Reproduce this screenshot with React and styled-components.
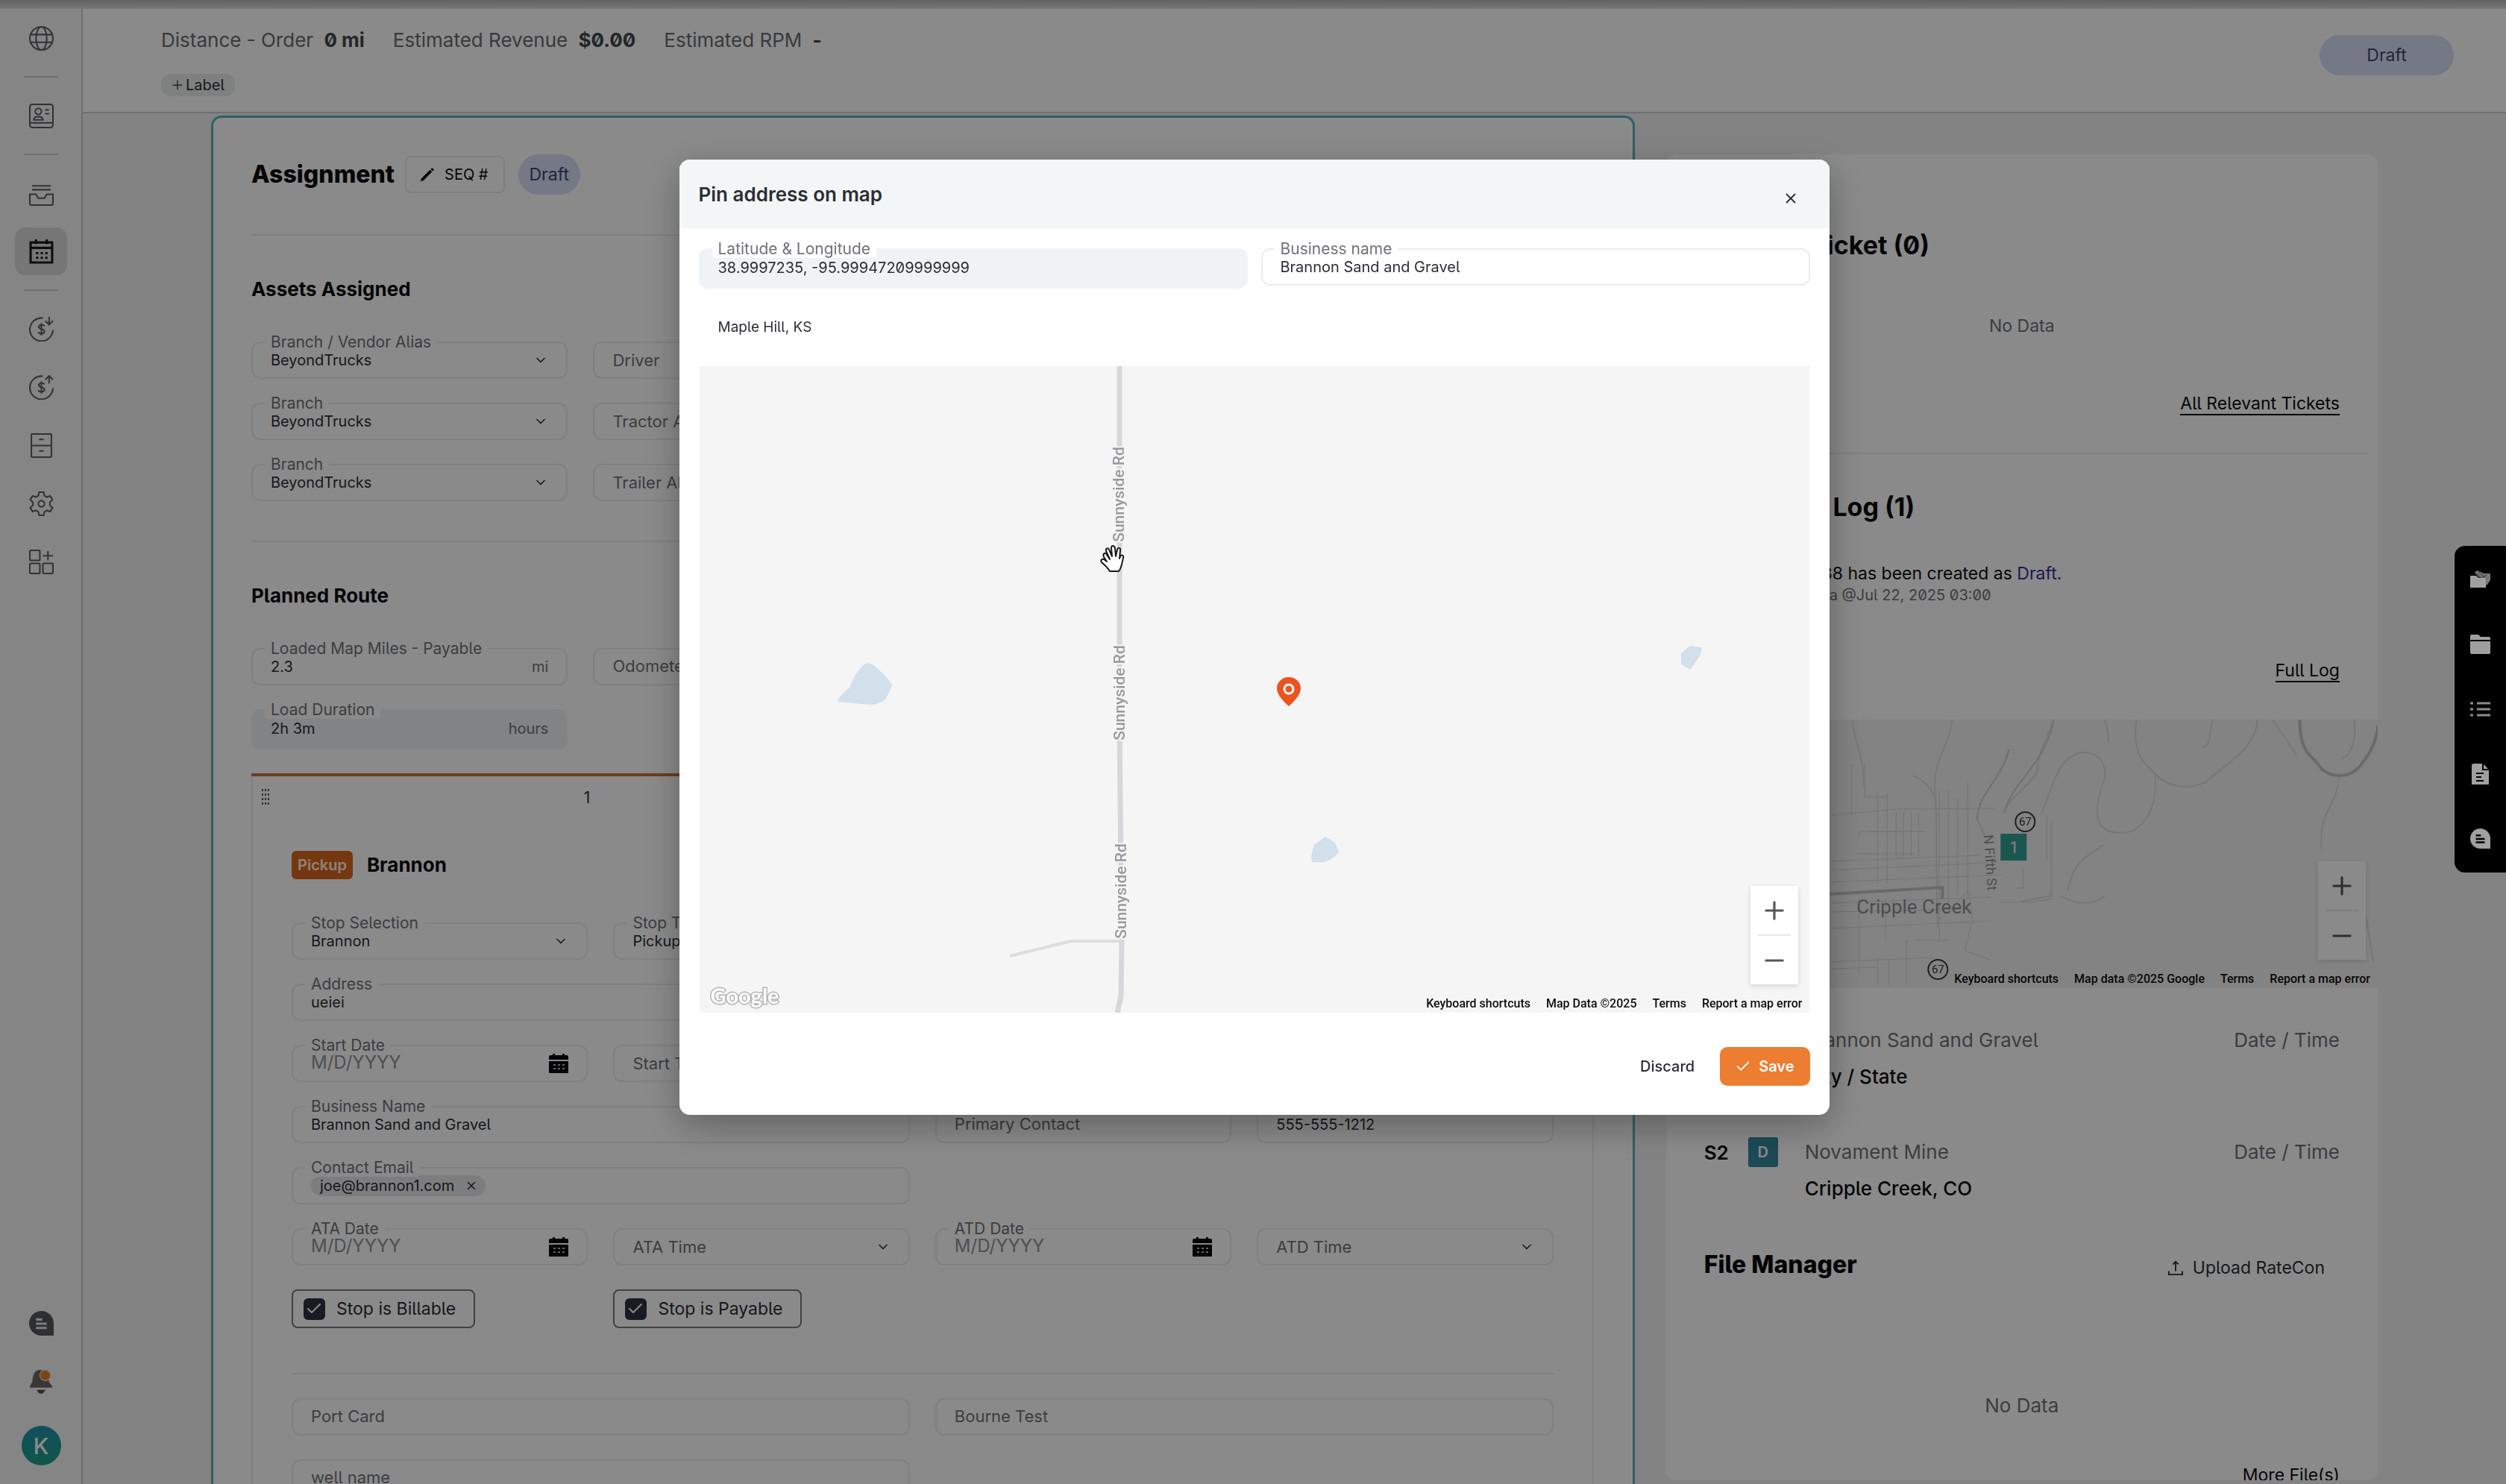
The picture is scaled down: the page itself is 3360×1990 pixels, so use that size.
import React from 'react'
import styled, { createGlobalStyle } from 'styled-components'
import { Check, ChevronDown, Hand, Plus, Minus, X } from 'lucide-react'

const fontSans = "Inter, 'Liberation Sans', sans-serif"
const fontMap = "Roboto, 'Liberation Sans', sans-serif"
const colorInk = '#0b0b0d'
const colorText = '#2b2e34'
const colorMuted = '#707278'
const colorLine = '#ededee'
const colorOrange = '#ed7d31'
const colorTeal = '#55b0bf'

const assetRows = [
	{ label: 'Branch / Vendor Alias', next: 'Driver' },
	{ label: 'Branch', next: 'Tractor Alias' },
	{ label: 'Branch', next: 'Trailer Alias' },
]

const App = () => (
	<>
		<GlobalStyle />
		<Page>
			<Strip />
			<Shell>
				<SideBar />
				<Main>
					<Header />
					<Columns>
						<Assignment />
						<Aside />
					</Columns>
				</Main>
			</Shell>
		</Page>
		<Backdrop>
			<PinModal />
		</Backdrop>
		<Rail />
	</>
)

/* Side bar */

const SideBar = () => (
	<Side>
		<SideGroup>
			<SideButton aria-label="Website"><GlobeIcon /></SideButton>
			<SideLine />
			<SideButton aria-label="Contacts"><CardIcon /></SideButton>
			<SideLine />
			<SideButton aria-label="Orders"><TrayIcon /></SideButton>
			<SideGap />
			<SideButton aria-label="Planner" $active><PlannerIcon /></SideButton>
			<SideLine />
			<SideButton aria-label="Receivables"><MoneyIcon down /></SideButton>
			<SideGap />
			<SideButton aria-label="Payables"><MoneyIcon /></SideButton>
			<SideGap />
			<SideButton aria-label="Records"><CabinetIcon /></SideButton>
			<SideGap />
			<SideButton aria-label="Settings"><GearIcon /></SideButton>
			<SideGap />
			<SideButton aria-label="Apps"><AppsIcon /></SideButton>
		</SideGroup>
		<SideGroup>
			<SideButton aria-label="Chat"><ChatIcon size={33} fill="#55585f" lines="#e8e8ea" /></SideButton>
			<SideGap />
			<SideButton aria-label="Notifications"><BellIcon /></SideButton>
			<SideGap />
			<Avatar aria-label="Account">K</Avatar>
		</SideGroup>
	</Side>
)

const Stroke = ({ size = 33, children, width = 2 }) => (
	<svg width={size} height={size} viewBox="0 0 32 32" fill="none" stroke="currentColor" strokeWidth={width}>
		{children}
	</svg>
)

const GlobeIcon = () => (
	<Stroke>
		<circle cx="16" cy="16" r="15" />
		<ellipse cx="16" cy="16" rx="7" ry="15" />
		<path d="M2 11h28M2 21h28" />
	</Stroke>
)

const CardIcon = () => (
	<Stroke>
		<rect x="1" y="1" width="30" height="30" rx="3" />
		<path d="M1 25h30" />
		<circle cx="12" cy="10" r="4" />
		<path d="M6 21c0-3 2-4 6-4s6 1 6 4zM21 8h5M21 13h5" />
	</Stroke>
)

const TrayIcon = () => (
	<Stroke>
		<path d="M4 6h24M4 11h24M1 17h8l3 5h8l3-5h8v12a2 2 0 0 1-2 2H3a2 2 0 0 1-2-2z" />
	</Stroke>
)

const PlannerIcon = () => (
	<Stroke width={3}>
		<path d="M2 4h28v26H2zM2 11h28M9 0v6M23 0v6" />
		<path d="M9 18h3M15 18h3M21 18h3M9 24h3M15 24h3M21 24h3" strokeWidth="3" />
	</Stroke>
)

const MoneyIcon = ({ down }) => (
	<Stroke>
		<path d="M18 1.500A15 15 0 1 0 31 17" />
		<path d={down ? 'M26 0v9M21 5l5 5 5-5' : 'M26 11V2M21 6l5-5 5 5'} />
		<path d="M20 12c-1-2-7-2.500-7.500.8C12 16.500 20 15 20 19c0 3.500-7 3.500-8 .5M16 8v16" />
	</Stroke>
)

const CabinetIcon = () => (
	<Stroke>
		<rect x="3" y="1" width="26" height="30" rx="1" />
		<path d="M3 16h26M13 8h6M13 23h6" />
	</Stroke>
)

const GearIcon = () => (
	<Stroke>
		<circle cx="16" cy="16" r="4" />
		<path d="M13 1h6l1 4.500 3 1.800 4.500-1.500 3 5-3.500 3.200v4l3.500 3.200-3 5-4.500-1.500-3 1.800-1 4.500h-6l-1-4.500-3-1.800-4.500 1.500-3-5L5 18v-4l-3.500-3.200 3-5L9 7.300l3-1.800z" />
	</Stroke>
)

const AppsIcon = () => (
	<Stroke>
		<rect x="1" y="1" width="13" height="13" rx="1" />
		<rect x="1" y="18" width="13" height="13" rx="1" />
		<rect x="18" y="18" width="13" height="13" rx="1" />
		<path d="M24.500 2v12M18 8h13" />
	</Stroke>
)

const ChatIcon = ({ size, fill, lines }) => (
	<svg width={size} height={size} viewBox="0 0 32 32" fill="none">
		<path d="M16 0a16 16 0 0 1 16 16v16H16a16 16 0 0 1 0-32z" fill={fill} />
		<path d="M9 11h8M9 16.500h14M9 22h14" stroke={lines} strokeWidth="3" />
	</svg>
)

const BellIcon = () => (
	<svg width="33" height="33" viewBox="0 0 32 32">
		<path d="M14 1c6 0 10 4 11 10l1 6 4 5v2H1v-2l3-5 1-7C6 5 9 1 14 1z" fill="#6b6763" />
		<path d="M10 27h11c-1 3-3 5-5.500 5S11 30 10 27z" fill="#4a4a4c" />
		<circle cx="21" cy="8" r="7" fill="#e8802a" stroke="#f6f6f6" />
	</svg>
)

/* Header */

const Header = () => (
	<Top>
		<div>
			<Stats>
				<span>Distance - Order <b>0 mi</b></span>
				<span>Estimated Revenue <b>$0.00</b></span>
				<span>Estimated RPM <b>-</b></span>
			</Stats>
			<LabelButton><Plus size={20} strokeWidth={1.500} />Label</LabelButton>
		</div>
		<StatusPill $wide>Draft</StatusPill>
	</Top>
)

/* Form parts */

const Field = ({ label, value, unit, select, date, span, disabled, children }) => (
	<Box $span={span} $disabled={disabled}>
		<Caption>{label}</Caption>
		{children}
		{!children && select && (
			<Select defaultValue={value}>
				<option>{value}</option>
			</Select>
		)}
		{!children && !select && (
			<Input
				defaultValue={value}
				placeholder={date ? 'M/D/YYYY' : ''}
				disabled={disabled}
				$date={date}
			/>
		)}
		{unit && <Unit>{unit}</Unit>}
		{select && <ChevronDown size={20} color={colorText} />}
		{date && <DateIcon />}
	</Box>
)

const EmptyField = ({ label, select, span }) => (
	<Box $span={span}>
		{select ? (
			<Select aria-label={label} $empty>
				<option>{label}</option>
			</Select>
		) : (
			<Input aria-label={label} placeholder={label} />
		)}
		{select && <ChevronDown size={20} color={colorText} />}
	</Box>
)

const DateIcon = () => (
	<svg width="26" height="28" viewBox="0 0 26 28" fill={colorInk}>
		<path d="M5 1h3v2h10V1h3v2h3a2 2 0 0 1 2 2v4H0V5a2 2 0 0 1 2-2h3z" />
		<path d="M0 11h26v15a1 1 0 0 1-1 1H1a1 1 0 0 1-1-1z" />
		<path d="M6 16h3M12 16h3M18 16h3M6 21h3M12 21h3M18 21h3" stroke="#b5b5b5" strokeWidth="2" />
	</svg>
)

const Tick = ({ label }) => (
	<TickBox>
		<input type="checkbox" defaultChecked />
		<Check size={24} color="#ffffff" strokeWidth={2} />
		{label}
	</TickBox>
)

/* Assignment card */

const Assignment = () => (
	<Card>
		<CardHead>
			<Heading>Assignment</Heading>
			<SeqButton>
				<svg width="20" height="20" viewBox="0 0 22 22" fill={colorInk}>
					<path d="M1 21l1-4L15 4l3 3L5 20zM16 3l2-2 3 3-2 2z" />
				</svg>
				SEQ #
			</SeqButton>
			<StatusPill>Draft</StatusPill>
		</CardHead>
		<Section>
			<SubHeading>Assets Assigned</SubHeading>
			<Grid>
				{assetRows.map(row => (
					<React.Fragment key={row.next}>
						<Field label={row.label} value="BeyondTrucks" select />
						<EmptyField label={row.next} select />
						<Blank $span={2} />
					</React.Fragment>
				))}
			</Grid>
		</Section>
		<Section>
			<SubHeading>Planned Route</SubHeading>
			<Grid>
				<Field label="Loaded Map Miles - Payable" value="2.3" unit="mi" />
				<EmptyField label="Odometer" />
				<Blank $span={2} />
				<Field label="Load Duration" value="2h 3m" unit="hours" disabled />
			</Grid>
		</Section>
		<Stop>
			<Tabs>
				<Tab $active>
					<DragDots />
					1
				</Tab>
				<Tab>2</Tab>
			</Tabs>
			<StopBody>
				<StopHead>
					<PickupBadge>Pickup</PickupBadge>
					<SubHeading>Brannon</SubHeading>
				</StopHead>
				<Grid>
					<Field label="Stop Selection" value="Brannon" select />
					<Field label="Stop Type" value="Pickup" select />
					<Blank $span={2} />
					<Field label="Address" value="ueiei" span={4} />
					<Field label="Start Date" date />
					<EmptyField label="Start Time" select />
					<Blank $span={2} />
					<Field label="Business Name" value="Brannon Sand and Gravel" span={2} />
					<EmptyField label="Primary Contact" />
					<Field label="Phone" value="555-555-1212" />
					<Field label="Contact Email" span={2}>
						<Chip>
							joe@brannon1.com
							<X size={18} />
						</Chip>
					</Field>
					<Blank $span={2} />
					<Field label="ATA Date" date />
					<EmptyField label="ATA Time" select />
					<Field label="ATD Date" date />
					<EmptyField label="ATD Time" select />
					<Tick label="Stop is Billable" />
					<Tick label="Stop is Payable" />
				</Grid>
				<Extra>
					<EmptyField label="Port Card" span={2} />
					<EmptyField label="Bourne Test" span={2} />
					<EmptyField label="well name" span={2} />
				</Extra>
			</StopBody>
		</Stop>
	</Card>
)

const DragDots = () => (
	<svg width="10" height="22" viewBox="0 0 10 22" fill="#5a5a5c">
		{[0, 1, 2, 3].map(y =>
			[0, 1, 2].map(x => <rect key={`${x}-${y}`} x={x * 4} y={y * 6} width="2" height="3" />)
		)}
	</svg>
)

/* Right column */

const Aside = () => (
	<Panel>
		<PanelBlock>
			<PanelHeading>Support Ticket (0)</PanelHeading>
			<TicketEmpty>No Data</TicketEmpty>
			<MoreLink href="#tickets">All Relevant Tickets</MoreLink>
		</PanelBlock>
		<PanelLine />
		<PanelBlock $log>
			<PanelHeading>Operation Log (1)</PanelHeading>
			<LogText>
				Assignment 1238 has been created as <em>Draft.</em>
			</LogText>
			<LogMeta>By Kristina Moreira @Jul 22, 2025 03:00</LogMeta>
			<MoreLink href="#log">Full Log</MoreLink>
		</PanelBlock>
		<TownMap />
		<Route>
			<RouteStop>
				<RouteCode>S1<TypeBadge $pickup>P</TypeBadge></RouteCode>
				<RouteName>Brannon Sand and Gravel</RouteName>
				<RouteName>Date / Time</RouteName>
				<RoutePlace>City / State</RoutePlace>
			</RouteStop>
			<RouteStop>
				<RouteCode>S2<TypeBadge>D</TypeBadge></RouteCode>
				<RouteName>Novament Mine</RouteName>
				<RouteName>Date / Time</RouteName>
				<RoutePlace>Cripple Creek, CO</RoutePlace>
			</RouteStop>
		</Route>
		<Files>
			<FilesHead>
				<Heading as="h2">File Manager</Heading>
				<UploadButton>
					<svg width="20" height="20" viewBox="0 0 22 22" fill="none" stroke={colorText} strokeWidth="2">
						<path d="M11 16V2M7 6l4-4 4 4M1 16v5h20v-5" />
					</svg>
					Upload RateCon
				</UploadButton>
			</FilesHead>
			<FilesEmpty>No Data</FilesEmpty>
			<FilesMore href="#files">More File(s)</FilesMore>
		</Files>
	</Panel>
)

const TownMap = () => (
	<MapFrame $town>
		<svg width="100%" height="360" viewBox="0 0 956 360" preserveAspectRatio="xMaxYMid slice" fill="none">
			<rect width="956" height="360" fill="#f2f2f3" />
			<g stroke="#dcdcde" strokeWidth="2">
				<path d="M252 0c0 30 14 40 15 90M385 0c-4 40-26 50-23 100 4 30 0 60 4 180M461 40c-8 40-44 60-42 95l10 20" />
				<path d="M521 0c-10 30-20 40-22 70-10 20-40 35-44 55M590 0c4 20 6 25 4 30M734 0c-3 20-4 40-14 36" />
				<path d="M505 125c12-20 18-78 56-81 30 0 34 30 24 48-12 40-6 60 28 60 30-2 48-35 44-76" />
				<path d="M632 0c-6 50 12 58 24 72 20 22 60 24 78 4 30-24 60-44 60-76" />
				<path d="M815 0l32 48M924 0c4 40-10 50-16 52M904 74c-4 50-26 40-24 100M940 265l10 60" />
				<path d="M518 138v98l-40 8M530 236c20 12 44 14 60 0M540 230c6-40 30-50 48-62M332 75c20 8 26 20 30 30" />
			</g>
			<g stroke="#d6d6d8" strokeWidth="1">
				<path d="M222 128l90-8 130-1M222 190l200-8M222 202l210-10M222 218l230-10M222 246l215-8M222 258l190-4M222 280l215-10M222 325l140-6M222 334l60-2" />
				<path d="M250 60v70M268 60v44h30v-5M298 100v120M285 100v120M310 124v60M320 124v60M330 124v60M340 124v60M368 95v200M380 95v150M392 105v130M406 84v156" />
				<path d="M260 160v-10h60M255 180h80M272 150h76M260 240v100M296 240v54M324 295v60M285 320v36M300 320v36M338 296h40M366 270l40-40M408 230l4 40-10 40 34 12" />
				<path d="M480 200v26h-10M448 245h44l28-5M512 130v60" />
			</g>
			<path d="M222 234l150-9v16" stroke="#c4c4c7" strokeWidth="4" />
			<path d="M851 0c0 48 20 50 26 62 14 18 44 18 58-4 12-14 20-34 21-50" stroke="#c4c4c6" strokeWidth="4" />
			<path d="M461 40c-8 40-44 60-42 95M521 0c-10 60-54 80-66 125" stroke="#d0d0d2" strokeWidth="2" />
			<g fontFamily={fontMap} textAnchor="middle">
				<text x="334" y="260" fontSize="26" fill="#8d8f92">Cripple Creek</text>
				<text transform="translate(430 192) rotate(86)" fontSize="18" fill="#8d8f92">N Fifth St</text>
				<g fill="#f2f2f3" stroke="#3a3a3c" strokeWidth="2">
					<circle cx="483" cy="137" r="13" />
					<circle cx="366" cy="335" r="13" />
				</g>
				<rect x="450" y="153" width="35" height="36" fill="#359f97" />
				<text x="468" y="179" fontSize="22" fill="#f2f2f3">1</text>
				<g fontSize="15" fill="#3a3a3c">
					<text x="483" y="142">67</text>
					<text x="366" y="340">67</text>
				</g>
			</g>
		</svg>
		<ZoomControl />
		<Credits data="Map data ©2025 Google" />
	</MapFrame>
)

const ZoomControl = () => (
	<ZoomBox>
		<button aria-label="Zoom in"><Plus size={38} color="#55565a" strokeWidth={2} /></button>
		<hr />
		<button aria-label="Zoom out"><Minus size={38} color="#55565a" strokeWidth={2} /></button>
	</ZoomBox>
)

const Credits = ({ data }) => (
	<CreditRow>
		<a href="#keys">Keyboard shortcuts</a>
		<span>{data}</span>
		<a href="#terms">Terms</a>
		<a href="#report">Report a map error</a>
	</CreditRow>
)

/* Modal */

const PinModal = () => (
	<Modal role="dialog" aria-label="Pin address on map">
		<ModalHead>
			<ModalTitle>Pin address on map</ModalTitle>
			<CloseButton aria-label="Close"><X size={22} strokeWidth={2} /></CloseButton>
		</ModalHead>
		<ModalBody>
			<ModalFields>
				<Field label="Latitude & Longitude" value="38.9997235, -95.99947209999999" disabled />
				<Field label="Business name" value="Brannon Sand and Gravel" />
			</ModalFields>
			<Place>Maple Hill, KS</Place>
			<MapFrame>
				<svg width="100%" height="867" viewBox="0 0 1488 867" fill="none">
					<rect width="1488" height="867" fill="#f5f5f5" />
					<path d="M563 0v480l3 292-1 73-5 22" stroke="#d5d7db" strokeWidth="7" />
					<path d="M416 791l82-20h68" stroke="#dcdde0" strokeWidth="4" />
					<g fill="#d1e0eb">
						<path d="M227 398q6 2 12 8 16 14 19 22l-8 18q-10 8-21 8l-44-4q0-6 17-20 4-14 12-23 7-9 13-9z" />
						<path d="M839 631l13 8 5 13q-8 10-20 13h-16l-1-8 4-15z" />
						<path d="M1328 375l16 2-2 10-14 20-12-7v-15z" />
					</g>
					<g
						fontFamily={fontMap}
						fontSize="21"
						fontWeight="500"
						fill="#98999e"
						stroke="#f5f5f5"
						strokeWidth="4"
						paintOrder="stroke"
						textAnchor="middle"
					>
						<text transform="translate(569 172) rotate(-90)">Sunnyside Rd</text>
						<text transform="translate(570 438) rotate(-90)">Sunnyside Rd</text>
						<text transform="translate(572 704) rotate(-90)">Sunnyside Rd</text>
					</g>
					<path d="M790 456q-16-14-16-24a16 15 0 0 1 32 0q0 10-16 24z" fill="#e9541f" />
					<circle cx="790" cy="433" r="6" stroke="#ffffff" strokeWidth="3" />
					{/* grab cursor */}
					<path
						d="M542 256c-2-5 2-7 4-3l4 6-5-11c-1-4 3-5 4-2l4 9-1-11c0-4 4-4 5 0l1 11 2-9c1-3 5-3 4 1l-1 11 1-3c2-3 5-1 4 2-2 8-2 13-6 18h-12c-3-5-6-8-11-12-2-3 1-5 3-4l4 3z"
						fill="#ffffff"
						stroke="#1a1a1a"
						strokeWidth="2"
						strokeLinejoin="round"
					/>
				</svg>
				<Google>Google</Google>
				<ZoomControl />
				<Credits data="Map Data ©2025" />
			</MapFrame>
		</ModalBody>
		<ModalFoot>
			<DiscardButton>Discard</DiscardButton>
			<SaveButton><Check size={22} strokeWidth={2} />Save</SaveButton>
		</ModalFoot>
	</Modal>
)

/* Floating tool rail */

const Rail = () => (
	<RailBox>
		<button aria-label="Shared folders">
			<svg width="27" height="24" viewBox="0 0 27 24">
				<path d="M6 3l3-3 5 2 4 2h9v9l-5 7z" fill="#777" />
				<path d="M9 4l5 6 8-4M11 2l10 8" stroke="#333" fill="none" />
				<path d="M0 7h8l3 3h10v13H0z" fill="#a0a0a0" />
			</svg>
		</button>
		<button aria-label="Folder">
			<svg width="27" height="26" viewBox="0 0 27 26" fill="#a0a0a0">
				<path d="M0 7V2a2 2 0 0 1 2-2h9l3 3h11a2 2 0 0 1 2 2v2zM0 9h27v15a2 2 0 0 1-2 2H2a2 2 0 0 1-2-2z" />
			</svg>
		</button>
		<button aria-label="List">
			<svg width="27" height="20" viewBox="0 0 27 20" stroke="#8c8c8c" strokeWidth="3">
				<path d="M0 2h4M0 10h4M0 18h4M9 2h18M9 10h18M9 18h18" />
			</svg>
		</button>
		<button aria-label="Document">
			<svg width="23" height="28" viewBox="0 0 23 28" fill="none">
				<path d="M3 0h12l8 8v20H0V3a3 3 0 0 1 3-3z" fill="#a0a0a0" />
				<path d="M15 0v8h8M6 13h10M6 18h7M6 23h10" stroke="#000" strokeWidth="2" />
			</svg>
		</button>
		<button aria-label="Messages"><ChatIcon size={27} fill="#a0a0a0" lines="#000" /></button>
	</RailBox>
)

const GlobalStyle = createGlobalStyle`
	* {
		box-sizing: border-box;
	}

	body {
		background: #f3f3f3;
		color: ${colorText};
		font-family: ${fontSans};
		font-feature-settings: 'cv05', 'zero';
		margin: 0;
		overflow: hidden;
	}

	button,
	input,
	select {
		color: inherit;
		font-family: inherit;
		font-feature-settings: inherit;
		margin: 0;
	}

	button {
		align-items: center;
		background: none;
		border: none;
		display: flex;
		padding: 0;
	}

	svg {
		display: block;
		flex: none;
	}

	h1,
	h2,
	p {
		margin: 0;
	}
`

const Page = styled.div`
	display: flex;
	flex-direction: column;
	height: 100vh;
	overflow: hidden;
`

const Strip = styled.div`
	background: linear-gradient(#b4b4b4, #dedede);
	flex: none;
	height: 12px;
`

const Shell = styled.div`
	display: flex;
	flex: 1;
	min-height: 0;
`

const Side = styled.nav`
	background: #f6f6f6;
	border-right: 2px solid #cccccc;
	color: #5c5e64;
	display: flex;
	flex: none;
	flex-direction: column;
	justify-content: space-between;
	padding: 7px 19px 25px 20px;
	width: 111px;
`

const SideGroup = styled.div`
	align-items: center;
	display: flex;
	flex-direction: column;
`

const SideButton = styled.button`
	background: ${props => (props.$active ? '#dadada' : 'none')};
	border-radius: 14px;
	color: ${props => (props.$active ? '#1a1a1c' : 'inherit')};
	height: 64px;
	justify-content: center;
	width: 70px;
`

const SideGap = styled.i`
	height: 14px;
`

const SideLine = styled.i`
	background: #cfcfcf;
	height: 2px;
	margin: 19px 0;
	width: 46px;
`

const Avatar = styled.button`
	background: linear-gradient(#2193ad, #1f9f85);
	border-radius: 50%;
	color: #ffffff;
	font-size: 30px;
	font-weight: 500;
	height: 53px;
	justify-content: center;
	margin-top: 14px;
	width: 53px;
`

const Main = styled.main`
	display: flex;
	flex: 1;
	flex-direction: column;
	min-width: 0;
`

const Top = styled.header`
	align-items: flex-start;
	background: #ffffff;
	border-bottom: 2px solid #d0d0d4;
	display: flex;
	flex: none;
	height: 140px;
	justify-content: space-between;
	padding: 24px 70px 0 105px;

	> span {
		margin-top: 11px;
	}
`

const Stats = styled.div`
	color: #6a6c71;
	display: flex;
	font-size: 26px;
	gap: 38px;
	line-height: 36px;

	b {
		color: #44464a;
		font-weight: 700;
		margin-left: 7px;
	}
`

const LabelButton = styled.button`
	background: #eaefed;
	border-radius: 12px;
	font-size: 20px;
	gap: 1px;
	height: 30px;
	margin-top: 27px;
	padding: 0 14px 0 12px;
`

const StatusPill = styled.span`
	background: #d8def6;
	border-radius: 28px;
	color: #3f4673;
	font-size: 23px;
	line-height: 54px;
	padding: 0 15px;
	text-align: center;
	width: ${props => (props.$wide ? '180px' : 'auto')};
`

const Columns = styled.div`
	display: grid;
	flex: 1;
	gap: 42px;
	grid-template-columns: minmax(0, 2fr) minmax(0, 1fr);
	min-height: 0;
	padding: 3px 172px 0;
`

const Card = styled.section`
	background: #ffffff;
	border: 3px solid ${colorTeal};
	border-bottom: none;
	border-radius: 14px 14px 0 0;
	min-height: 0;
	overflow: hidden;
	padding: 49px 52px 0 51px;
`

const CardHead = styled.div`
	align-items: center;
	display: flex;
	gap: 14px;
	height: 54px;
	margin-bottom: 53px;

	> span {
		margin-left: 4px;
	}
`

const Heading = styled.h1`
	color: ${colorInk};
	font-size: 32px;
	font-weight: 800;
	line-height: 40px;
`

const SeqButton = styled.button`
	border: 2px solid ${colorLine};
	border-radius: 8px;
	color: ${colorInk};
	font-size: 20px;
	gap: 13px;
	height: 50px;
	padding: 0 20px 0 18px;
`

const Section = styled.div`
	border-top: 2px solid ${colorLine};
	padding: 56px 0 53px;

	& + & {
		padding-bottom: 32px;
	}
`

const SubHeading = styled.h2`
	color: ${colorInk};
	font-size: 26px;
	font-weight: 700;
	line-height: 32px;
`

const Grid = styled.div`
	align-items: start;
	display: grid;
	gap: 32px 34px;
	grid-template-columns: repeat(4, minmax(0, 1fr));
	padding-top: 54px;
`

const Blank = styled.span`
	grid-column: span ${props => props.$span};
`

const Box = styled.label`
	align-items: center;
	background: ${props => (props.$disabled ? '#eff3f6' : 'transparent')};
	border: 2px solid ${props => (props.$disabled ? '#eff3f6' : colorLine)};
	border-radius: 12px;
	display: flex;
	grid-column: span ${props => props.$span || 1};
	height: ${props => (props.$disabled ? '54px' : '50px')};
	padding: ${props => (props.$disabled ? '0 24px 3px' : '0 24px')};
	position: relative;
`

/* sits on the top border of its box */
const Caption = styled.span`
	background: #ffffff;
	border-radius: 4px;
	color: ${colorMuted};
	font-size: 21px;
	left: 16px;
	line-height: 24px;
	padding: 0 8px;
	position: absolute;
	top: -13px;
`

const Input = styled.input`
	background: none;
	border: none;
	flex: 1;
	font-size: 20px;
	height: 30px;
	min-width: 0;
	outline: none;
	padding: 0;

	&::placeholder {
		color: ${props => (props.$date ? '#909298' : colorMuted)};
		font-size: ${props => (props.$date ? '24px' : '22px')};
		opacity: 1;
	}

	&:disabled {
		color: ${colorText};
	}
`

const Select = styled.select`
	appearance: none;
	background: none;
	border: none;
	color: ${props => (props.$empty ? colorMuted : colorText)};
	flex: 1;
	font-size: ${props => (props.$empty ? '22px' : '20px')};
	height: 30px;
	min-width: 0;
	outline: none;
	padding: 0;
`

const Unit = styled.span`
	color: ${colorMuted};
	font-size: 20px;
`

const Chip = styled.span`
	align-items: center;
	background: #e8e8ec;
	border-radius: 14px;
	display: flex;
	font-size: 20px;
	gap: 14px;
	line-height: 28px;
	padding: 0 10px 0 12px;
`

const TickBox = styled.label`
	align-items: center;
	border: 2px solid #77797e;
	border-radius: 8px;
	display: flex;
	font-size: 23px;
	gap: 15px;
	height: 52px;
	justify-self: start;
	padding: 0 24px 0 14px;

	input {
		appearance: none;
		background: #2a3244;
		border-radius: 6px;
		height: 29px;
		margin: 0;
		width: 29px;
	}

	svg {
		margin: 0 3px 0 -42px;
	}
`

const Stop = styled.div`
	border: 2px solid ${colorLine};
	border-top: none;
`

const Tabs = styled.div`
	display: flex;
	margin: 0 -2px;
`

const Tab = styled.div`
	align-items: center;
	border-top: 4px solid ${props => (props.$active ? '#c96f35' : colorLine)};
	display: flex;
	flex: 1;
	font-size: 21px;
	height: 60px;
	justify-content: center;

	svg {
		margin-left: 14px;
		margin-right: auto;
	}

	&:first-child:after {
		content: '';
		margin-left: auto;
		width: 24px;
	}
`

const StopBody = styled.div`
	padding: 42px 52px 0;
`

const StopHead = styled.div`
	align-items: center;
	display: flex;
	gap: 19px;
	height: 42px;
	margin-bottom: 2px;
`

const PickupBadge = styled.span`
	background: #d9661d;
	border-radius: 6px;
	color: #fff3e6;
	font-size: 20px;
	font-weight: 600;
	line-height: 38px;
	padding: 0 8px;
`

const Extra = styled(Grid)`
	border-top: 2px solid ${colorLine};
	margin-top: 60px;
	padding-top: 32px;
`

const Panel = styled.aside`
	background: #ffffff;
	border-radius: 14px;
	display: flex;
	flex-direction: column;
	margin: 52px 0 5px;
	min-height: 0;
	overflow: hidden;
`

const PanelBlock = styled.div`
	display: flex;
	flex: none;
	flex-direction: column;
	height: ${props => (props.$log ? '356px' : '400px')};
	padding: ${props => (props.$log ? '51px' : '102px')} 51px 0;
`

const PanelHeading = styled.h2`
	color: ${colorInk};
	font-size: 34px;
	font-weight: 700;
	line-height: 40px;
`

const PanelLine = styled.hr`
	border: none;
	border-top: 2px solid ${colorLine};
	margin: 0 13px;
	width: auto;
`

const TicketEmpty = styled.p`
	color: ${colorMuted};
	font-size: 23px;
	line-height: 32px;
	margin-top: 72px;
	text-align: center;
`

const MoreLink = styled.a`
	align-self: flex-end;
	border-bottom: 2px solid ${colorInk};
	color: ${colorInk};
	font-size: 23px;
	line-height: 28px;
	margin-top: 74px;
	text-decoration: none;
`

const LogText = styled.p`
	color: ${colorInk};
	font-size: 23px;
	line-height: 32px;
	margin-top: 53px;

	em {
		color: #35309a;
		font-style: normal;
	}
`

const LogMeta = styled.p`
	color: ${colorMuted};
	font-size: 20px;
	line-height: 26px;
`

/* holds the map drawing and the controls laid over it */
const MapFrame = styled.div`
	flex: none;
	height: ${props => (props.$town ? '360px' : '867px')};
	overflow: hidden;
	position: relative;
`

const ZoomBox = styled.div`
	background: #ffffff;
	bottom: 38px;
	box-shadow: 0 2px 6px rgba(0, 0, 0, 0.15);
	position: absolute;
	right: 16px;
	width: 64px;

	button {
		height: 65px;
		justify-content: center;
		width: 64px;
	}

	hr {
		border: none;
		border-top: 2px solid #e6e6e6;
		margin: 0 10px;
	}
`

const CreditRow = styled.div`
	bottom: 0;
	color: #0c0c0e;
	display: flex;
	font-family: ${fontMap};
	font-size: 16px;
	font-weight: 500;
	gap: 21px;
	line-height: 24px;
	position: absolute;
	right: 10px;

	a {
		color: inherit;
		text-decoration: none;
	}
`

const Route = styled.div`
	padding: 50px 51px 0;
`

const RouteStop = styled.div`
	align-content: start;
	column-gap: 36px;
	display: grid;
	font-size: 26px;
	grid-template-columns: 99px 1fr auto;
	height: 150px;
	row-gap: 9px;
`

const RouteCode = styled.b`
	align-items: center;
	color: ${colorInk};
	display: flex;
	font-weight: 600;
	height: 40px;
	justify-content: space-between;
`

const TypeBadge = styled.i`
	background: ${props => (props.$pickup ? colorOrange : '#33899c')};
	border-radius: 3px;
	color: #ffffff;
	font-size: 20px;
	font-style: normal;
	line-height: 40px;
	text-align: center;
	width: 40px;
`

const RouteName = styled.span`
	color: ${colorMuted};
	line-height: 40px;
`

const RoutePlace = styled.span`
	color: ${colorInk};
	font-weight: 500;
	grid-column: 2;
	line-height: 40px;
`

const Files = styled.div`
	display: flex;
	flex-direction: column;
	padding: 0 51px;
`

const FilesHead = styled.div`
	align-items: center;
	display: flex;
	height: 42px;
	justify-content: space-between;
`

const UploadButton = styled.button`
	font-size: 23px;
	gap: 13px;
	padding: 8px 20px 0 0;
`

const FilesEmpty = styled.p`
	color: ${colorMuted};
	font-size: 26px;
	line-height: 32px;
	margin-top: 152px;
	text-align: center;
`

const FilesMore = styled(MoreLink)`
	margin-top: 63px;
`

const Backdrop = styled.div`
	align-items: flex-start;
	background: rgba(0, 0, 0, 0.46);
	display: flex;
	inset: 0;
	justify-content: center;
	padding: 214px 0 0 3px;
	position: fixed;
`

const Modal = styled.div`
	background: #ffffff;
	border-radius: 14px;
	box-shadow: 0 14px 50px rgba(0, 0, 0, 0.3);
	max-width: 1542px;
	overflow: hidden;
	width: 90%;
`

const ModalHead = styled.div`
	background: #f3f6f6;
	display: flex;
	height: 92px;
	justify-content: space-between;
	padding: 31px 41px 0 26px;
`

const ModalTitle = styled.h2`
	color: ${colorText};
	font-size: 26px;
	font-weight: 600;
	line-height: 32px;
`

const CloseButton = styled.button`
	height: 42px;
`

const ModalBody = styled.div`
	padding: 27px 26px 0;
`

const ModalFields = styled.div`
	align-items: start;
	display: grid;
	gap: 18px;
	grid-template-columns: 1fr 1fr;
`

const Place = styled.p`
	font-size: 19px;
	line-height: 28px;
	padding: 38px 26px;
`

const Google = styled.span`
	-webkit-text-stroke: 3px #b5b5b7;
	bottom: 5px;
	color: #ffffff;
	font-family: Lato, sans-serif;
	font-size: 29px;
	font-weight: 700;
	left: 16px;
	line-height: 36px;
	paint-order: stroke;
	position: absolute;
`

const ModalFoot = styled.div`
	align-items: center;
	display: flex;
	gap: 34px;
	justify-content: flex-end;
	padding: 46px 26px 39px;
`

const DiscardButton = styled.button`
	font-size: 20px;
	font-weight: 500;
`

const SaveButton = styled.button`
	background: ${colorOrange};
	border-radius: 10px;
	color: #ffffff;
	font-size: 20px;
	font-weight: 600;
	gap: 10px;
	height: 52px;
	padding: 0 21px 0 20px;
`

const RailBox = styled.div`
	background: #000000;
	border-radius: 14px 0 0 14px;
	display: flex;
	flex-direction: column;
	padding: 1px 0 2px;
	position: fixed;
	right: 0;
	top: 732px;
	width: 69px;

	button {
		height: 87px;
		justify-content: center;
	}
`

export default App
